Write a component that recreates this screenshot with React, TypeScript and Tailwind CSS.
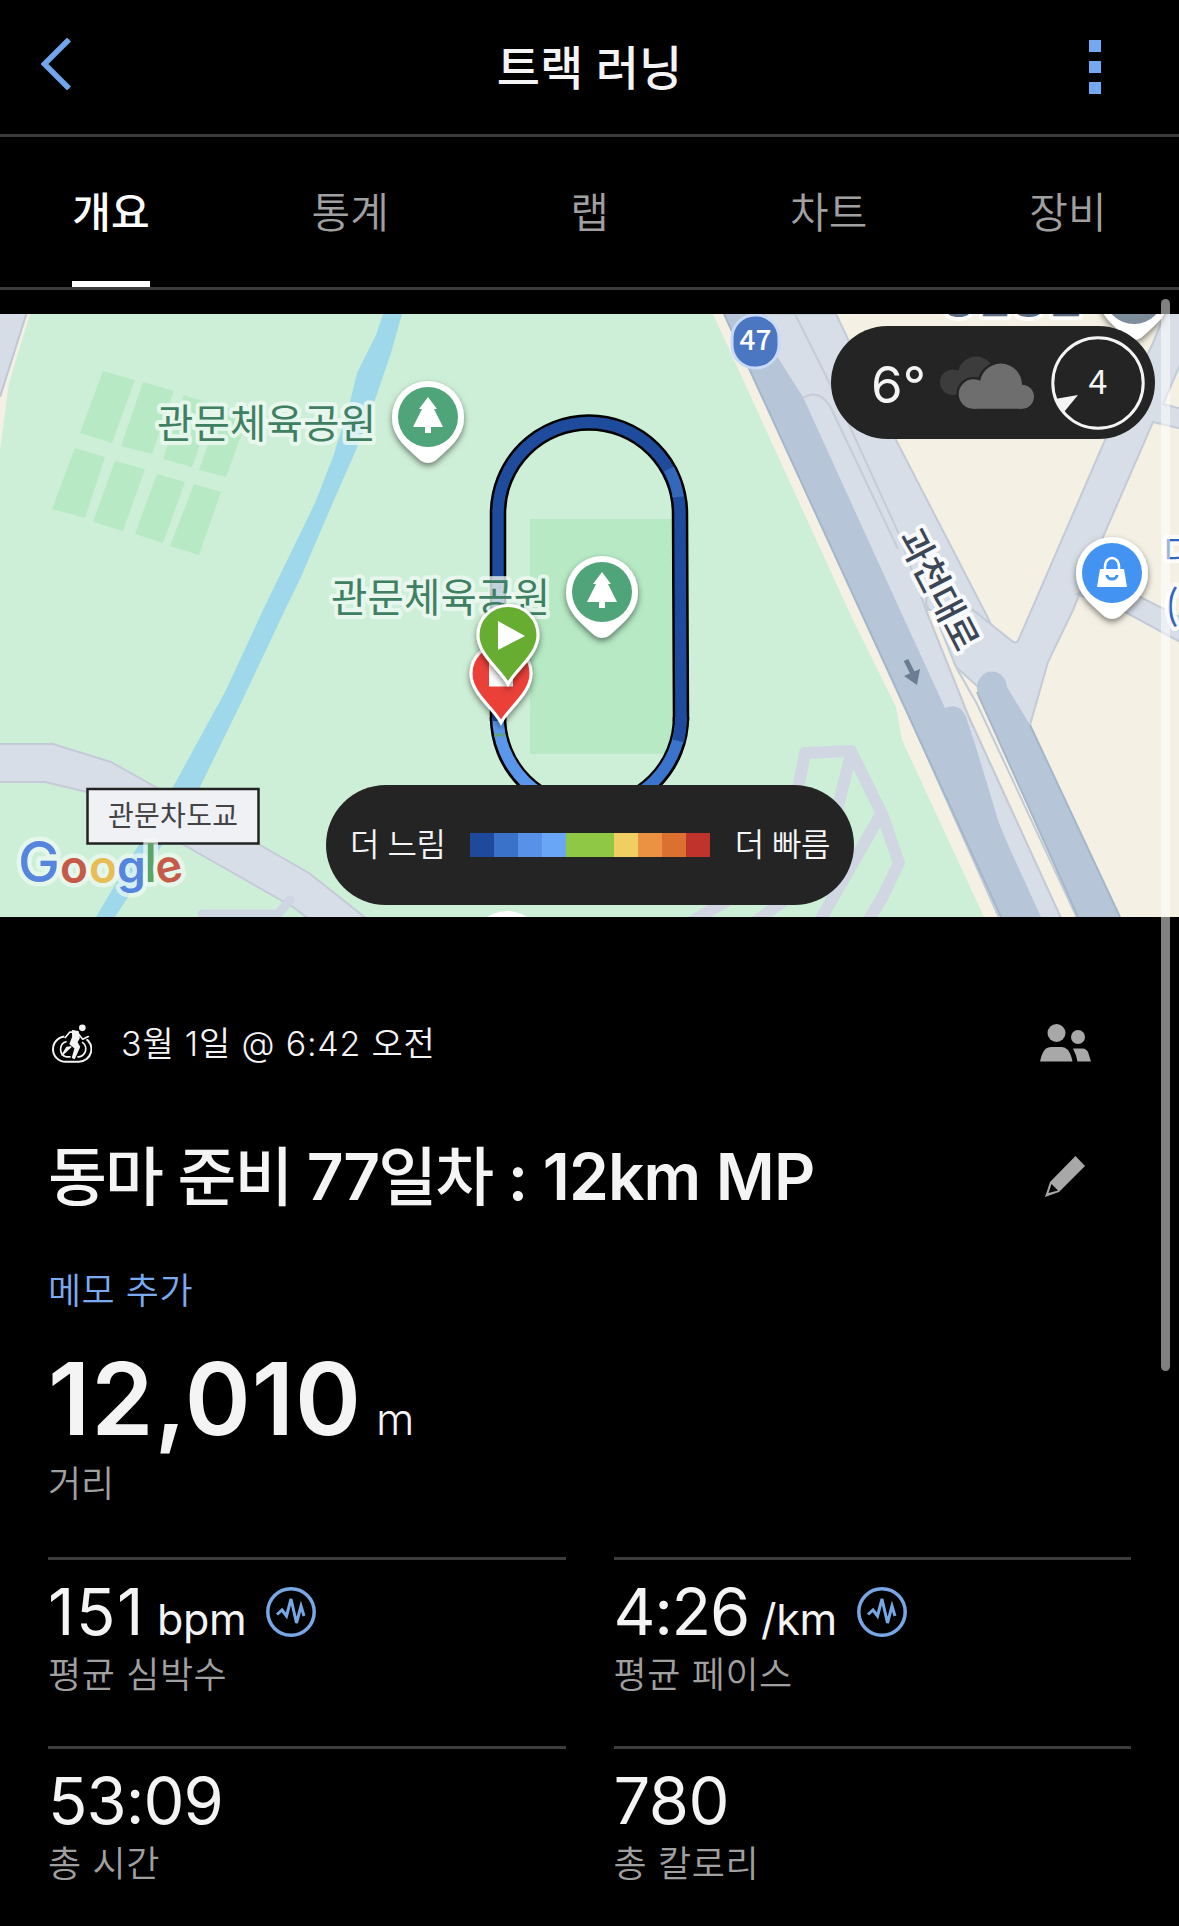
import type { ReactNode } from "react";

type Stat = {
  value: string;
  unit?: string;
  label: string;
  chart?: boolean;
  spacing: string;
};

const tabs = ["개요", "통계", "랩", "차트", "장비"];

const stats: Stat[] = [
  { value: "151", unit: "bpm", label: "평균 심박수", chart: true, spacing: "tracking-[1.5px]" },
  { value: "4:26", unit: "/km", label: "평균 페이스", chart: true, spacing: "tracking-[-1.3px]" },
  { value: "53:09", label: "총 시간", spacing: "tracking-[-1px]" },
  { value: "780", label: "총 칼로리", spacing: "tracking-[-0.5px]" },
];

const paceColors = [
  "bg-[#1f4a9c]",
  "bg-[#3a72ca]",
  "bg-[#5892e8]",
  "bg-[#6aa6f6]",
  "bg-[#8fc845]",
  "bg-[#8fc845]",
  "bg-[#f0ce62]",
  "bg-[#ea9142]",
  "bg-[#db7030]",
  "bg-[#c0332c]",
];

const courts = [
  "103,57 135,66 112,129 80,119",
  "143,68 174,77 152,140 121,132",
  "184,81 214,91 192,153 163,145",
  "222,92 249,100 226,163 199,156",
  "75,134 105,143 85,204 52,195",
  "115,147 145,155 123,217 93,208",
  "157,160 185,168 163,229 135,220",
  "194,170 221,178 199,241 170,232",
];

function PlacePin({ x, y, color, children }: { x: number; y: number; color: string; children?: ReactNode }) {
  return (
    <g transform={`translate(${x} ${y})`}>
      <path
        d="M0 -36a36 36 0 0 1 36 36c0 14-7 23-15 31L8 43q-8 6-16 0L-21 31C-29 23-36 14-36 0A36 36 0 0 1 0-36Z"
        fill="#fff"
        filter="url(#pinShadow)"
      />
      <circle r="30" fill={color} />
      {children}
    </g>
  );
}

function Tree() {
  return <path d="M0-20 9-8H6L15 10H3v6h-6v-6h-12L-6-8h-3Z" fill="#fff" />;
}

function RoutePin({ x, y, color, children }: { x: number; y: number; color: string; children: ReactNode }) {
  return (
    <g transform={`translate(${x} ${y})`}>
      <path
        d="M0 0C-7-14-30-29-30-49a30 29.500 0 0 1 60 0C30-29 7-14 0 0Z"
        fill={color}
        stroke="#fff"
        strokeWidth="3"
        filter="url(#pinShadow)"
      />
      {children}
    </g>
  );
}

function MapCanvas() {
  const route = "M498 407V199.5a91 91 0 0 1 182 0L681 407";

  return (
    <svg viewBox="0 0 1179 603" className="block h-full w-full font-['Noto_Sans_CJK_KR',sans-serif]">
      <defs>
        <filter id="pinShadow" x="-30%" y="-30%" width="160%" height="170%">
          <feDropShadow dx="0" dy="3" stdDeviation="3" floodColor="#000" floodOpacity="0.5" />
        </filter>
      </defs>

      {/* land */}
      <rect width="1179" height="603" fill="#ceefd7" />
      <path d="M0 0H30L9 69 0 136Z" fill="#f5f0e5" />
      <path d="M0 0H27L0 83Z" fill="#d7dde7" />
      <path d="M27-2 0 83" stroke="#bfc6d4" strokeWidth="2" />
      <path d="M713 0 852 304 896 393 902 426 984 603H1179V0Z" fill="#f4f0e4" />
      {courts.map((points) => (
        <polygon key={points} points={points} fill="#b6e9c4" />
      ))}
      <path d="M530 205H680V440H530Z" fill="#b6e9c4" />

      {/* stream */}
      <path
        d="M383 0H402L391 39 376 83 356 136 331 193 301 263 285 296 241 389 200 473 115 603H96L173 473 226 376 263 296 315 189 333 143 350 88 357 59 376 21Z"
        fill="#9fd8ea"
      />

      {/* bridge road */}
      <path
        d="M-3 430H53L111 448 152 471 260 531 309 559 367 605H309L293 593 184 531 87 478 45 468H-3Z"
        fill="#d8dee7"
        stroke="#c5cad9"
        strokeWidth="2"
      />
      <path d="M202 600H278L290 586" fill="none" stroke="#cfd6e3" strokeWidth="9" strokeLinecap="round" />

      {/* parking lanes */}
      <g fill="none" stroke="#d0d7e3" strokeWidth="12" strokeLinejoin="round">
        <path d="M798 475 805 439 851 437 882 500 899 549 882 584 866 610" />
        <path d="M851 440 836 500 800 570M881 500 818 610M691 608 728 586M755 608 785 586" />
      </g>

      {/* highway */}
      <g stroke="#c2cbd6" strokeWidth="2">
        <path d="M730 0H836L896 126 988 304 1000 330H940L926 296 969 403 1062 606H1000Z" fill="#d8dee7" />
        <path
          d="M1166-3 1153 29 1105 126 1028 304 1018 327Q1015 330 1012 327L973 296 930 250 926 290 956 353 1030 420V411L1048 348 1073 296 1103 223 1153 108 1182 115V95L1163 90 1182 46V-3Z"
          fill="#d8dee7"
        />
        <path d="M1103 265 1142 284 1182 304V329L1127 299 1077 280Z" fill="#d8dee7" />
      </g>
      <path d="M933 296 956 353 977 390 1078 606H1062L969 403 926 296Z" fill="#f4f0e4" stroke="#c2cbd6" strokeWidth="2" />
      <path d="M795 0 835 80 898 218 926 296M803 84Q818 74 830 92L898 235" fill="none" stroke="#c5ccd8" strokeWidth="2" />
      <path
        d="M724 0H750L803 83 900 296 945 394Q960 388 966 403L975 430 999 509 1009 533 1041 603H1001L860 296Z"
        fill="#b6c5d8"
      />
      <path d="M724 0 860 296 1001 603" fill="none" stroke="#a6b6ca" strokeWidth="2" />
      <path d="M977 376A15 17 0 0 1 1007 373L1030 411 1120 603H1078Z" fill="#b6c5d8" />
      <path d="M1030 411 1120 603M977 378 1078 603" stroke="#a6b6ca" strokeWidth="2" />
      <path d="M906 346 913 360" stroke="#6b7d92" strokeWidth="5" />
      <path d="M904 362 920 355 917 371Z" fill="#6b7d92" />

      {/* road shield */}
      <rect x="732" y="1" width="47" height="53" rx="23" fill="#4a76c2" stroke="#c8daf7" strokeWidth="3" />
      <text x="755.5" y="36" textAnchor="middle" fontSize="28" fontWeight="500" fill="#fff">
        47
      </text>

      {/* map labels */}
      <g stroke="#fff" strokeWidth="8" strokeLinejoin="round" paintOrder="stroke" strokeOpacity="0.85">
        <text x="939" y="-1" fontSize="39" fontWeight="500" fill="#5b7087">
          경인공원
        </text>
        <text
          fontSize="36"
          fontWeight="500"
          fill="#3b4656"
          textAnchor="middle"
          textLength="131"
          transform="translate(938 276) rotate(62.7) translate(0 12)"
        >
          과천대로
        </text>
        <text x="1164" y="250" fontSize="33" fontWeight="400" fill="#3465b8">
          다
        </text>
        <text x="1165" y="305" fontSize="40" fontWeight="400" fill="#3465b8">
          (
        </text>
      </g>

      {/* route */}
      <path d={route} fill="none" stroke="#000" strokeWidth="16.5" />
      <path d="M681 403A91.500 91.500 0 0 1 498 403" fill="none" stroke="#000" strokeWidth="16.5" />
      <path d="M681 403A91.500 91.500 0 0 1 589 494" fill="none" stroke="#3b74cc" strokeWidth="11.5" />
      <path d="M589 494A91.500 91.500 0 0 1 498 403" fill="none" stroke="#5a97ea" strokeWidth="11.5" />
      <path d={route} fill="none" stroke="#1f4b9c" strokeWidth="11.5" />
      <path d="M669 155Q677 170 678 183" fill="none" stroke="#3567ba" strokeWidth="11" />
      <path d="M681 403Q681 415 678.500 427" fill="none" stroke="#1f4b9c" strokeWidth="11.5" />
      <path d="M494 421H505" stroke="#5fa183" strokeWidth="3" />

      <g stroke="#f0faf4" strokeWidth="8" strokeLinejoin="round" paintOrder="stroke" strokeOpacity="0.8">
        <text x="157" y="123.5" fontSize="39.5" fontWeight="400" fill="#3f8063" textLength="219">
          관문체육공원
        </text>
        <text x="331" y="298" fontSize="39.5" fontWeight="400" fill="#3f8063" textLength="219">
          관문체육공원
        </text>
      </g>

      <PlacePin x={428} y={103} color="#4fa47a">
        <Tree />
      </PlacePin>
      <PlacePin x={602} y={278} color="#4fa47a">
        <Tree />
      </PlacePin>
      <PlacePin x={1134} y={-20} color="#7d8d9c" />
      <PlacePin x={1112} y={259} color="#4394f2">
        <path d="M-12-4H12L15 14H-15Z" fill="#fff" />
        <path d="M-7-3V-7a7 8 0 0 1 14 0V-3" fill="none" stroke="#fff" strokeWidth="2.500" />
        <path d="M-5 2a5 4 0 0 0 10 0" fill="none" stroke="#4394f2" strokeWidth="3" />
      </PlacePin>
      <circle cx="507" cy="633" r="36" fill="#fff" />

      <RoutePin x={501} y={408.5} color="#ea4138">
        <rect x="-12" y="-60" width="24" height="24" fill="#fff" />
      </RoutePin>
      <RoutePin x={508} y={370} color="#66ad30">
        <path d="M-10-63 17-48-10-34Z" fill="#fff" />
      </RoutePin>

      {/* bridge label */}
      <rect x="87.5" y="475" width="171" height="54.5" fill="#f0f1f5" stroke="#222" strokeWidth="2.5" />
      <text x="108" y="512" fontSize="28" fill="#444" textLength="130">
        관문차도교
      </text>

      {/* map attribution */}
      <g
        fontFamily="Inter, sans-serif"
        fontWeight="600"
        stroke="#f0faf4"
        strokeWidth="9"
        strokeLinejoin="round"
        strokeOpacity="0.7"
        paintOrder="stroke"
      >
        <text x="18" y="568" fontSize="56" fontWeight="500" fill="#5585dc">
          G
        </text>
        <text x="60" y="569" fontSize="46" fill="#c65a48">
          o
        </text>
        <text x="89" y="569" fontSize="46" fill="#e8bd55">
          o
        </text>
        <text x="117" y="569" fontSize="46" fill="#5585dc">
          g
        </text>
        <text x="144" y="568" fontSize="53" fontWeight="500" fill="#5ba566">
          l
        </text>
        <text transform="translate(159 571) rotate(-14)" fontSize="45" fill="#c65a48">
          e
        </text>
      </g>
    </svg>
  );
}

function WeatherPill() {
  return (
    <div className="absolute top-[12px] right-[24px] flex h-[113px] w-[324px] items-center rounded-full bg-[#242424] pl-[40px]">
      <span className="w-[69px] pt-[3px] text-[51px] leading-none">6°</span>
      <svg viewBox="120 170 281 157" className="h-[53px] w-[94px]">
        <g fill="#3c3c3c">
          <circle cx="158" cy="248" r="38" />
          <circle cx="228" cy="226" r="55" />
        </g>
        <g fill="#6e6e6e" stroke="#242424" strokeWidth="14">
          <circle cx="220" cy="283" r="44" />
          <circle cx="302" cy="255" r="63" />
        </g>
        <g fill="#6e6e6e">
          <circle cx="220" cy="283" r="44" />
          <circle cx="302" cy="255" r="63" />
          <circle cx="365" cy="291" r="36" />
          <path d="M220 250H365V327H220Z" />
        </g>
      </svg>
      <svg viewBox="0 0 94 94" className="ml-[17px] size-[94px]">
        <circle cx="47" cy="47" r="45.200" fill="none" stroke="#f4f4f4" strokeWidth="3" />
        <path d="M4 63 27 59 13 76Z" fill="#f4f4f4" />
        <text x="47" y="58" textAnchor="middle" fontSize="34" fill="#f4f4f4" className="font-['Noto_Sans_CJK_KR',sans-serif]">
          4
        </text>
      </svg>
    </div>
  );
}

function PaceLegend() {
  return (
    <div className="absolute bottom-[12px] left-[326px] flex h-[120px] w-[528px] items-center justify-between rounded-full bg-[#242424] px-[24px] text-[32px] font-[350]">
      <span className="whitespace-nowrap tracking-[-0.5px]">더 느림</span>
      <div className="flex">
        {paceColors.map((color, i) => (
          <div key={i} className={`h-6 w-6 ${color}`} />
        ))}
      </div>
      <span className="whitespace-nowrap tracking-[-0.5px]">더 빠름</span>
    </div>
  );
}

function ActivityIcon() {
  const runner = (
    <>
      <path d="M76 80 89 64H104M116 70 128 85 145 77" fill="none" />
      <path d="M98 60 114 63 117 82 110 94 118 108 103 142 98 140 106 112 91 99 99 78Z" />
    </>
  );

  return (
    <svg viewBox="36 40 120 116" className="h-[39px] w-[40px]" fill="none" stroke="#f4f4f4" strokeLinejoin="round">
      <path d="M77 77a38 38 0 0 0 0 76H117a38 38 0 0 0 18-71" strokeWidth="6" />
      <path d="M80 92a24 24 0 0 0-2 46H92M112 138H117a24 24 0 0 0 9-44" strokeWidth="5" />
      <g stroke="#000" fill="#000" strokeWidth="11">
        {runner}
      </g>
      <path d="M93 108 66 133 80 110Z" fill="#f4f4f4" strokeWidth="4" />
      <g fill="#f4f4f4" strokeWidth="5" strokeLinecap="round">
        {runner}
      </g>
      <circle cx="127" cy="51" r="10" fill="#f4f4f4" stroke="none" />
    </svg>
  );
}

function ChartBadge() {
  return (
    <svg viewBox="0 0 50 50" className="ml-[20px] size-[50px] self-center" fill="none" stroke="#78a7e6">
      <circle cx="25" cy="25" r="23.200" strokeWidth="3.500" />
      <path d="M11 27.500 16 23 20.500 29 25 12 30.500 36 35 19 38 29" strokeWidth="3" />
    </svg>
  );
}

function StatCell({ stat }: { stat: Stat }) {
  return (
    <div className="h-[189px] border-t-3 border-[#3c3c3c] pt-[19px]">
      <div className="flex h-[66px] items-baseline whitespace-nowrap">
        <span className={`text-[65px] leading-none ${stat.spacing}`}>{stat.value}</span>
        {stat.unit && <span className="ml-[12px] text-[43px] leading-none tracking-[-0.3px]">{stat.unit}</span>}
        {stat.chart && <ChartBadge />}
      </div>
      <p className="mt-[8px] text-[36px] leading-[44px] font-[350] tracking-[0.6px] text-[#a0a0a0]">{stat.label}</p>
    </div>
  );
}

export default function App() {
  return (
    <div className="relative h-[1926px] w-[1179px] overflow-hidden bg-black font-['Inter','Noto_Sans_CJK_KR',sans-serif] text-[#f4f4f4]">
      <header className="flex h-[137px] items-center justify-between border-b-3 border-[#3c3c3c] pr-[78px] pl-[41px]">
        <svg viewBox="0 0 30 52" className="mb-[6px] h-[52px] w-[30px]" fill="none" stroke="#72a6ec" strokeWidth="5.500">
          <path d="M28 1.500 3.500 26 28 50.500" />
        </svg>
        <h1 className="ml-[19px] text-[47px] leading-none font-medium">트랙 러닝</h1>
        <div className="flex flex-col gap-[9px]">
          <span className="size-[12px] bg-[#72a9f2]" />
          <span className="size-[12px] bg-[#72a9f2]" />
          <span className="size-[12px] bg-[#72a9f2]" />
        </div>
      </header>

      <nav className="flex h-[153px] justify-between border-b-3 border-[#3c3c3c] px-[72px]">
        {tabs.map((tab, i) => (
          <div
            key={tab}
            className={
              i === 0
                ? "flex h-[150px] w-[78px] items-center justify-center border-b-6 border-white pt-[6px] text-[42px] font-medium whitespace-nowrap text-white"
                : "flex h-[150px] w-[78px] items-center justify-center text-[42px] font-[350] whitespace-nowrap text-[#a0a0a0]"
            }
          >
            {tab}
          </div>
        ))}
      </nav>

      <section className="relative mt-[24px] h-[603px] overflow-hidden">
        <MapCanvas />
        <WeatherPill />
        <PaceLegend />
      </section>

      <main className="px-[48px]">
        <div className="mt-[101px] flex h-[50px] items-center justify-between pr-[40px] pl-[4px]">
          <div className="flex items-center gap-[29px]">
            <ActivityIcon />
            <span className="text-[34px] font-[350] tracking-[0.8px]">3월 1일 @ 6:42 오전</span>
          </div>
          <svg viewBox="0 0 51 38" className="h-[38px] w-[51px]" fill="#a8a8a8">
            <circle cx="16.500" cy="9" r="9" />
            <circle cx="38" cy="13" r="7" />
            <path d="M0 37.500Q2 28 6 24.500 8 23 11 23H22Q25 23 28 26 31 30 32.500 37.500Z" />
            <path d="M33 24.500H43Q46 24.500 48 28L51 37.500H37.500Q36 30 33 24.500Z" />
          </svg>
        </div>

        <div className="mt-[68px] flex h-[80px] items-center justify-between pr-[46px]">
          <h2 className="pt-[2px] text-[64px] leading-none font-medium tracking-[-1.8px] whitespace-nowrap">
            동마 준비 <span className="font-semibold">77</span>일차{" "}
            <span className="font-semibold tracking-[-0.8px]">: 12km MP</span>
          </h2>
          <svg viewBox="0 0 40 41" className="h-[41px] w-[40px]" fill="#a8a8a8">
            <path fillRule="evenodd" d="M30.500 0 40 10 14 36 0 41 5 26ZM6.500 28 3.500 37 13 34.500Z" />
          </svg>
        </div>

        <button className="mt-[53px] block h-[44px] text-[36px] leading-[44px] font-[350] tracking-[0.5px] text-[#7aaaf0]">
          메모 추가
        </button>

        <div className="mt-[36px] flex items-baseline">
          <span className="text-[100px] leading-none font-semibold tracking-[1px]">12,010</span>
          <span className="ml-[14px] text-[44px] leading-none font-[350]">m</span>
        </div>
        <p className="mt-[13px] text-[36px] leading-[44px] font-[350] text-[#a0a0a0]">거리</p>

        <div className="mt-[51px] grid grid-cols-2 gap-x-[48px]">
          {stats.map((stat) => (
            <StatCell key={stat.label} stat={stat} />
          ))}
        </div>
      </main>

      {/* scroll indicator */}
      <div className="absolute top-[299px] right-[9px] h-[1072px] w-[9px] rounded-full bg-white/50" />
    </div>
  );
}
